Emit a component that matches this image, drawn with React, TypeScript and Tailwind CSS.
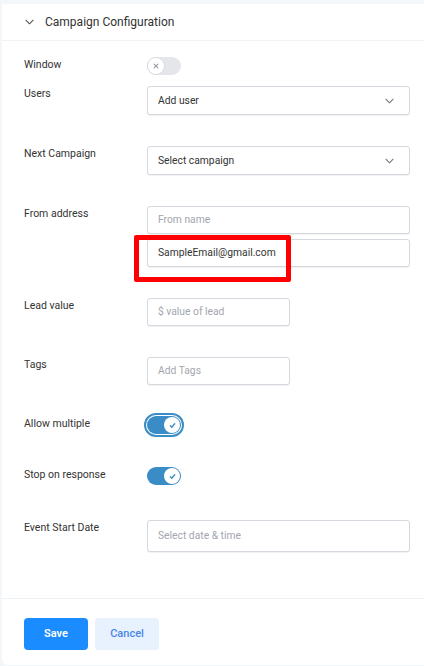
import React from 'react';

const font = { fontFamily: 'Roboto, "Noto Sans", Arial, sans-serif' };

function Chevron({ className }: { className?: string }) {
  return (
    <svg viewBox="0 0 10 6" className={className} fill="none" stroke="currentColor" strokeWidth="1.2" strokeLinecap="round" strokeLinejoin="round">
      <polyline points="1,1 5,5 9,1" />
    </svg>
  );
}

function Toggle({ on, focused }: { on: boolean; focused?: boolean }) {
  return (
    <div
      className={`relative w-[34px] h-[18px] rounded-full ${on ? 'bg-[#3a8cc6]' : 'bg-[#e4e6ea]'} ${
        focused ? 'ring-2 ring-[#3a8cc6] ring-offset-1' : ''
      }`}
    >
      <div
        className={`absolute top-[1px] w-[16px] h-[16px] rounded-full bg-white flex items-center justify-center ${
          on ? 'right-[1px]' : 'left-[1px] shadow-[0_0_0_1px_#d9dbe0]'
        }`}
      >
        {on ? (
          <svg viewBox="0 0 8 8" className="w-[7px] h-[7px]" fill="none" stroke="#3a8cc6" strokeWidth="1.5" strokeLinecap="round" strokeLinejoin="round">
            <polyline points="1.5,4.3 3.2,6 6.5,2" />
          </svg>
        ) : (
          <svg viewBox="0 0 8 8" className="w-[6px] h-[6px]" fill="none" stroke="#9a9ca3" strokeWidth="1.4" strokeLinecap="round">
            <line x1="1.5" y1="1.5" x2="6.5" y2="6.5" />
            <line x1="6.5" y1="1.5" x2="1.5" y2="6.5" />
          </svg>
        )}
      </div>
    </div>
  );
}

function Row({ label, className, children }: { label: string; className?: string; children: React.ReactNode }) {
  return (
    <div className={`grid grid-cols-[123px_1fr] items-start ${className ?? ''}`}>
      <div className="pt-px text-[10.5px] leading-[13px] text-[#333]">{label}</div>
      <div>{children}</div>
    </div>
  );
}

const inputBase =
  'flex items-center rounded-[3px] border border-[#d6d8df] bg-white px-[10px] text-[10.3px] shadow-[0_1px_1px_rgba(0,0,0,0.06)]';

function Select({ value }: { value: string }) {
  return (
    <div className={`${inputBase} h-[29px] justify-between text-[#333]`}>
      <span>{value}</span>
      <Chevron className="w-[9px] h-[6px] mr-[5px] text-[#777]" />
    </div>
  );
}

function Input({ placeholder, value, short, tall }: { placeholder?: string; value?: string; short?: boolean; tall?: boolean }) {
  return (
    <div className={`${inputBase} ${tall ? 'h-[32px]' : 'h-[28px]'} ${short ? 'w-[143px]' : ''}`}>
      {value ? <span className="text-[#333]">{value}</span> : <span className="text-[#a3a6ae]">{placeholder}</span>}
    </div>
  );
}

export default function App() {
  return (
    <div className="min-h-screen bg-[#f4f7fa] pl-[2px] pt-[4px]" style={font}>
      <div className="bg-white rounded-bl-[6px] flex flex-col">
        {/* Header */}
        <div className="h-[37px] border-b border-[#f0f2f4] flex items-center pl-[23px] gap-[11px] text-[#333]">
          <Chevron className="w-[9px] h-[6px] text-[#555]" />
          <span className="text-[12px]">Campaign Configuration</span>
        </div>

        {/* Body */}
        <div className="pl-[22px] pr-[14px] pt-[16px] pb-[46px]">
          <Row label="Window">
            <Toggle on={false} />
          </Row>
          <Row label="Users" className="mt-[11px]">
            <Select value="Add user" />
          </Row>
          <Row label="Next Campaign" className="mt-[31px]">
            <Select value="Select campaign" />
          </Row>
          <Row label="From address" className="mt-[31px]">
            <div className="flex flex-col gap-[5px]">
              <Input placeholder="From name" />
              <div className="relative">
                <Input value="SampleEmail@gmail.com" />
                <span className="absolute -left-[13px] -top-[4px] w-[157px] h-[47px] border-[5px] border-[#ff0000] rounded-[2px] pointer-events-none" />
              </div>
            </div>
          </Row>
          <Row label="Lead value" className="mt-[31px]">
            <Input placeholder="$ value of lead" short />
          </Row>
          <Row label="Tags" className="mt-[31px]">
            <Input placeholder="Add Tags" short />
          </Row>
          <Row label="Allow multiple" className="mt-[31px]">
            <Toggle on focused />
          </Row>
          <Row label="Stop on response" className="mt-[33px]">
            <Toggle on />
          </Row>
          <Row label="Event Start Date" className="mt-[35px]">
            <Input placeholder="Select date & time" tall />
          </Row>
        </div>

        {/* Footer */}
        <div className="border-t border-[#eef3f7] pl-[22px] pt-[19px] pb-[15px] flex gap-[7px]">
          <button className="w-[64px] h-[32px] rounded-[4px] bg-[#1a8cff] text-white text-[11px] font-semibold">Save</button>
          <button className="w-[64px] h-[32px] rounded-[4px] bg-[#e7f2fe] text-[#4a86e8] text-[11px] font-medium">Cancel</button>
        </div>
      </div>
    </div>
  );
}
